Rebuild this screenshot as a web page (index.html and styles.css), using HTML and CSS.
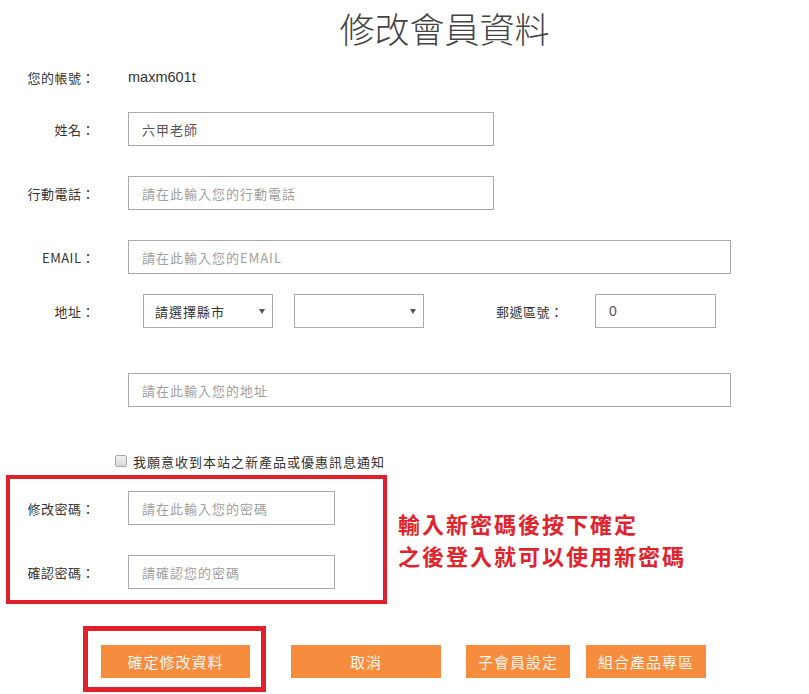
FILE: index.html
```html
<!DOCTYPE html>
<html lang="zh-Hant">
<head>
<meta charset="utf-8">
<title>修改會員資料</title>
<link rel="stylesheet" href="styles.css">
</head>
<body>
<div class="page">
  <h1 class="title">修改會員資料</h1>

  <div class="row row-account">
    <div class="label">您的帳號：</div>
    <div class="field account">maxm601t</div>
  </div>

  <div class="row row-name">
    <div class="label">姓名：</div>
    <input class="field input input-mid" type="text" value="六甲老師">
  </div>

  <div class="row row-gap">
    <div class="label">行動電話：</div>
    <input class="field input input-mid" type="text" placeholder="請在此輸入您的行動電話">
  </div>

  <div class="row row-gap">
    <div class="label">EMAIL：</div>
    <input class="field input input-wide" type="text" placeholder="請在此輸入您的EMAIL">
  </div>

  <div class="row row-addr">
    <div class="label">地址：</div>
    <div class="select-wrap select-first">
      <select class="select"><option>請選擇縣市</option></select>
    </div>
    <div class="select-wrap select-second">
      <select class="select"><option></option></select>
    </div>
    <div class="zip-label">郵遞區號：</div>
    <input class="input zip" type="text" value="0">
  </div>

  <div class="row row-street">
    <div class="label"></div>
    <input class="field input input-wide" type="text" placeholder="請在此輸入您的地址">
  </div>

  <label class="check-row">
    <input class="check" type="checkbox">
    <span class="check-text">我願意收到本站之新產品或優惠訊息通知</span>
  </label>

  <div class="pw-section">
    <div class="pw-box">
      <div class="row">
        <div class="label label-in">修改密碼：</div>
        <input class="field input input-short" type="password" placeholder="請在此輸入您的密碼">
      </div>
      <div class="row row-gap">
        <div class="label label-in">確認密碼：</div>
        <input class="field input input-short" type="password" placeholder="請確認您的密碼">
      </div>
    </div>
    <div class="note">
      <div>輸入新密碼後按下確定</div>
      <div>之後登入就可以使用新密碼</div>
    </div>
  </div>

  <div class="actions">
    <div class="confirm-wrap">
      <button class="btn btn-confirm" type="button">確定修改資料</button>
    </div>
    <button class="btn btn-cancel" type="button">取消</button>
    <button class="btn btn-sub" type="button">子會員設定</button>
    <button class="btn btn-combo" type="button">組合產品專區</button>
  </div>
</div>
</body>
</html>
```

FILE: styles.css
```css
* {
  box-sizing: border-box;
}

html, body {
  margin: 0;
  padding: 0;
  background: #ffffff;
}

body {
  font-family: "Liberation Sans", "Noto Sans CJK TC", sans-serif;
  color: #333333;
  font-size: 13px;
}

.page {
  width: 809px;
}

.title {
  margin: 0;
  padding: 4px 0 0 80px;
  text-align: center;
  font-family: "Noto Sans CJK TC", sans-serif;
  font-weight: 300;
  font-size: 35px;
  line-height: 48px;
  color: #444444;
  letter-spacing: 0;
}

.row {
  display: flex;
  align-items: center;
  height: 34px;
}

.row-account {
  margin-top: 8px;
}

.row-name {
  margin-top: 18px;
}

.row-gap {
  margin-top: 30px;
}

.row-addr {
  margin-top: 20px;
}

.row-street {
  margin-top: 45px;
}

.label {
  flex: none;
  width: 95px;
  text-align: right;
  font-family: "Noto Sans CJK TC", sans-serif;
  font-size: 13px;
  letter-spacing: 0.5px;
  color: #333333;
  white-space: nowrap;
}

.label-in {
  width: 85px;
}

.field {
  margin-left: 33px;
}

.account {
  font-family: "Liberation Sans", sans-serif;
  font-size: 14.5px;
  color: #333333;
}

.input {
  height: 34px;
  border: 1px solid #aaaaaa;
  border-radius: 0;
  padding: 0 13px;
  font-family: "Noto Sans CJK TC", sans-serif;
  font-size: 13px;
  letter-spacing: 1px;
  color: #555555;
  background: #ffffff;
  outline: none;
}

.input::placeholder {
  color: #a0a0a0;
}

.input-mid {
  width: 366px;
}

.input-wide {
  width: 603px;
}

.input-short {
  width: 207px;
}

.select-wrap {
  position: relative;
  flex: none;
  width: 130px;
  height: 34px;
}

.select-wrap::after {
  content: "";
  position: absolute;
  right: 8px;
  top: 15px;
  border-left: 3px solid transparent;
  border-right: 3px solid transparent;
  border-top: 5px solid #555555;
}

.select-first {
  margin-left: 48px;
}

.select-second {
  margin-left: 21px;
}

.select {
  appearance: none;
  -webkit-appearance: none;
  width: 100%;
  height: 34px;
  border: 1px solid #aaaaaa;
  border-radius: 0;
  background: #ffffff;
  padding: 0 0 0 11px;
  font-family: "Noto Sans CJK TC", sans-serif;
  font-size: 13px;
  letter-spacing: 1px;
  color: #333333;
  outline: none;
}

.zip-label {
  flex: none;
  width: 67px;
  margin-left: 72px;
  font-family: "Noto Sans CJK TC", sans-serif;
  font-size: 13px;
  letter-spacing: 0.5px;
  white-space: nowrap;
  color: #333333;
}

.zip {
  width: 121px;
  margin-left: 32px;
  font-family: "Liberation Sans", sans-serif;
  font-size: 14px;
}

.check-row {
  display: flex;
  align-items: center;
  height: 20px;
  margin-top: 44px;
  padding-left: 115px;
}

.check {
  appearance: none;
  -webkit-appearance: none;
  flex: none;
  width: 12px;
  height: 12px;
  margin: 0;
  border: 1px solid #a9a9a9;
  border-radius: 2px;
  background: linear-gradient(#f2f2f2, #d9d9d9);
}

.check-text {
  margin-left: 6px;
  font-family: "Noto Sans CJK TC", sans-serif;
  font-size: 13px;
  letter-spacing: 1px;
  color: #333333;
}

.pw-section {
  display: flex;
  align-items: flex-start;
  margin-top: 4px;
}

.pw-box {
  flex: none;
  width: 381px;
  margin-left: 6px;
  border: 4px solid #e2202b;
  padding: 12px 0 11px;
}

.note {
  margin-left: 11px;
  margin-top: 32px;
  font-family: "Noto Sans CJK TC", sans-serif;
  font-weight: 700;
  font-size: 22px;
  line-height: 32px;
  letter-spacing: 2px;
  color: #e0242d;
  white-space: nowrap;
}

.actions {
  display: flex;
  align-items: flex-start;
  margin-top: 22px;
  padding-left: 83px;
}

.confirm-wrap {
  flex: none;
  border: 5px solid #e2202b;
  padding: 14px 11px 9px 13px;
}

.btn {
  flex: none;
  height: 33px;
  border: none;
  border-radius: 0;
  padding: 0;
  background: #f58c3e;
  color: #fff6ee;
  font-family: "Noto Sans CJK TC", sans-serif;
  font-size: 15px;
  letter-spacing: 1px;
  cursor: pointer;
}

.btn-confirm {
  display: block;
  width: 149px;
}

.btn-cancel {
  width: 150px;
  margin-left: 25px;
  margin-top: 19px;
}

.btn-sub {
  width: 104px;
  margin-left: 25px;
  margin-top: 19px;
}

.btn-combo {
  width: 120px;
  margin-left: 16px;
  margin-top: 19px;
}
```
